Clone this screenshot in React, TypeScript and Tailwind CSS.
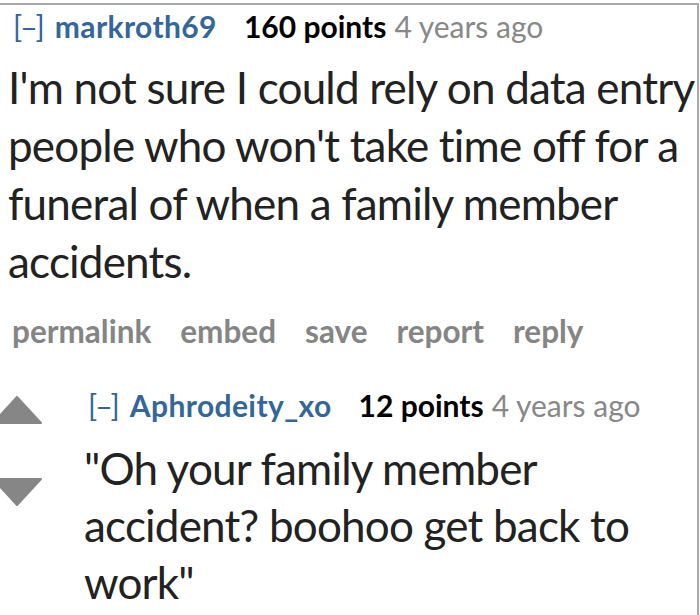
const font = { fontFamily: 'Lato, "Open Sans", sans-serif', fontVariantLigatures: 'none' as const };

function Tagline({ user, points }: { user: string; points: string }) {
  return (
    <div className="flex items-baseline whitespace-nowrap text-[30px] leading-[40px]">
      <span className="text-[#369] font-normal tracking-[-2px]">[–]</span>
      <span className="ml-[12px] font-bold text-[#369] tracking-[0.4px]">{user}</span>
      <span className="ml-[27px] font-bold text-black">{points}</span>
      <span className="ml-[8px] text-[#888]">4 years ago</span>
    </div>
  );
}

export default function App() {
  return (
    <div className="w-[700px] h-[615px] bg-white overflow-hidden" style={font}>
      <div className="mt-[3px] mr-[1px] border-t-2 border-r-2 border-[#a8a8a8] h-[612px]">
        <div className="pl-[13px] pt-[1px]">
          <Tagline user="markroth69" points="160 points" />
        </div>
        <p className="pl-[8px] pr-[2px] mt-[12px] text-[44px] leading-[58px] tracking-[-0.8px] text-[#222]">
          I'm not sure I could rely on data entry people who won't take time off for a funeral of when a family member accidents.
        </p>
        <div className="pl-[12px] mt-[21px] flex gap-[29px] text-[31.5px] leading-[40px] font-bold text-[#858585]">
          <span>permalink</span>
          <span>embed</span>
          <span>save</span>
          <span>report</span>
          <span>reply</span>
        </div>

        <div className="flex mt-[34px]">
          <div className="w-[84px] shrink-0 relative">
            <svg className="absolute left-[-8px] top-[11px]" width="50" height="28" viewBox="0 0 50 28">
              <path d="M25 1 L49 27 L1 27 Z" fill="#868686" stroke="#868686" strokeWidth="2" strokeLinejoin="round" />
            </svg>
            <svg className="absolute left-[-8px] top-[93px]" width="50" height="28" viewBox="0 0 50 28">
              <path d="M1 1 L49 1 L25 27 Z" fill="#868686" stroke="#868686" strokeWidth="2" strokeLinejoin="round" />
            </svg>
          </div>
          <div className="flex-1">
            <div className="pl-[4px]">
              <Tagline user="Aphrodeity_xo" points="12 points" />
            </div>
            <p className="mt-[15px] pr-[40px] text-[44px] leading-[57px] tracking-[-0.8px] text-[#222]">
              "Oh your family member accident? boohoo get back to work"
            </p>
          </div>
        </div>
      </div>
    </div>
  );
}
